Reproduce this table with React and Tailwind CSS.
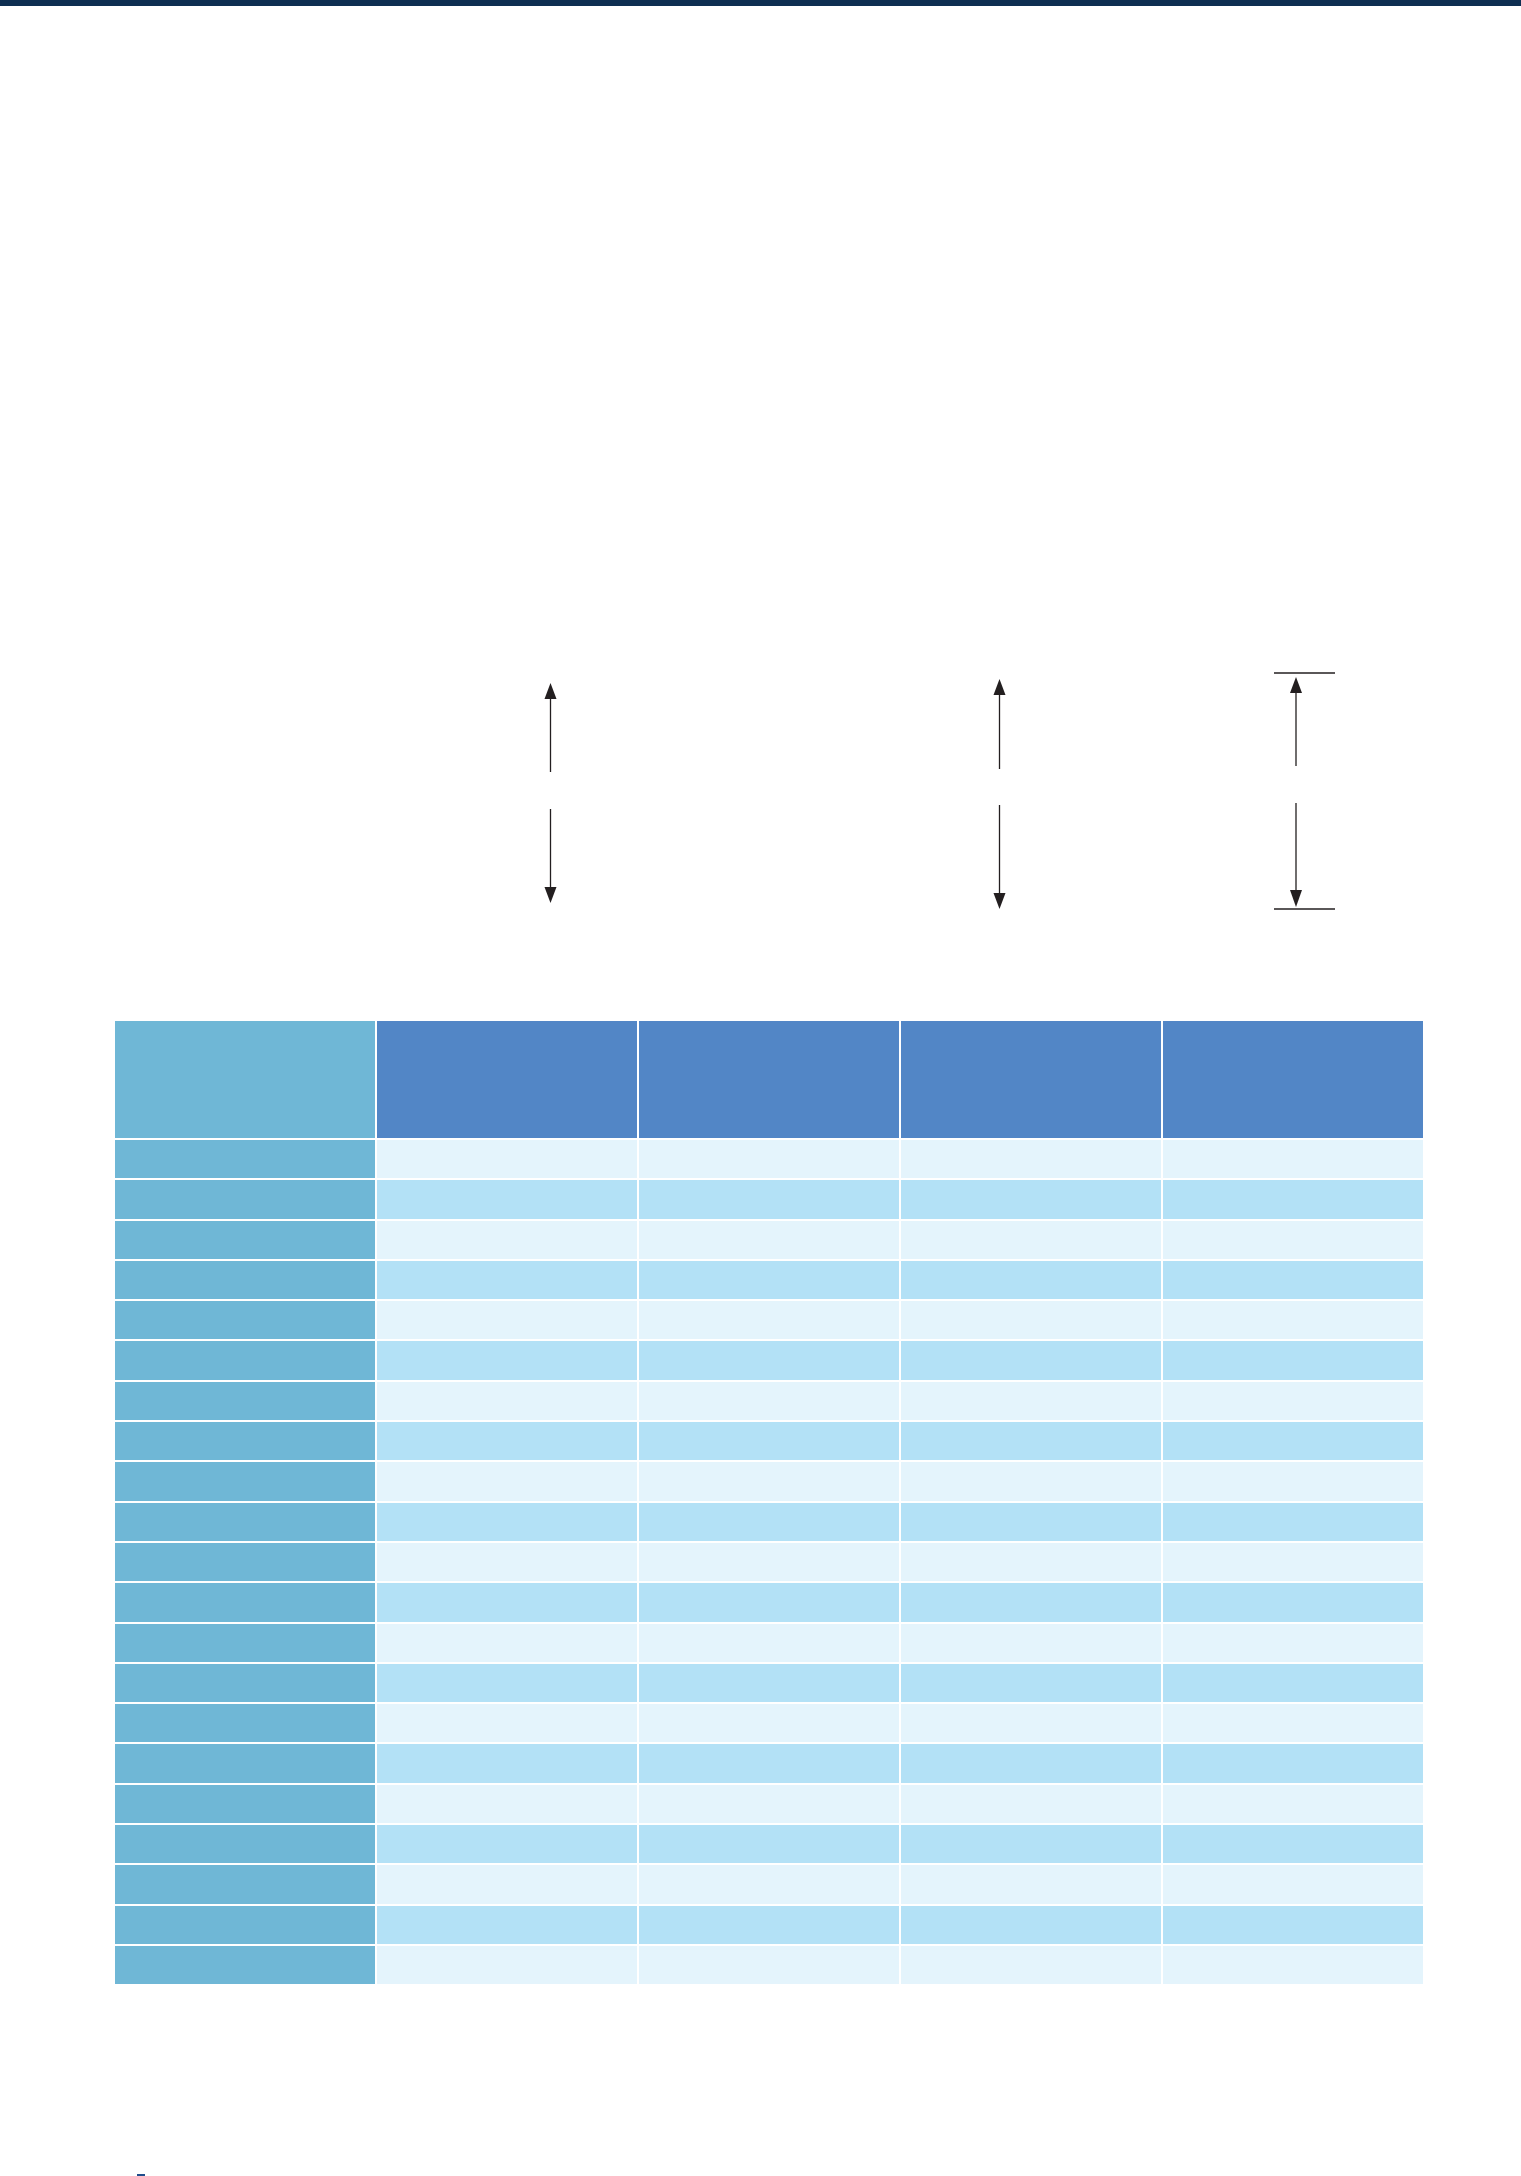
import React from "react";

const ROWS = 21;

function Arrow({ x, tip1, base1, end1, start2, base2, tip2 }) {
  return (
    <g>
      <polygon points={`${x},${tip1} ${x - 6},${base1} ${x + 6},${base1}`} fill="#231f20" />
      <line x1={x} y1={base1} x2={x} y2={end1} stroke="#231f20" strokeWidth="1.3" />
      <line x1={x} y1={start2} x2={x} y2={base2} stroke="#231f20" strokeWidth="1.3" />
      <polygon points={`${x},${tip2} ${x - 6},${base2} ${x + 6},${base2}`} fill="#231f20" />
    </g>
  );
}

export default function App() {
  return (
    <div className="w-[1521px] h-[2176px] bg-white overflow-hidden flex flex-col font-['Liberation_Sans',sans-serif]">
      <div className="h-[6px] w-full bg-[#0e2f52] shrink-0" />

      <svg className="mt-[654px] block shrink-0" width="1521" height="260" viewBox="0 0 1521 260">
        <Arrow x={550.5} tip1={23} base1={39} end1={112} start2={149} base2={227} tip2={243} />
        <Arrow x={999.5} tip1={19} base1={35} end1={109} start2={145} base2={233} tip2={249} />
        <line x1="1274" y1="13" x2="1335" y2="13" stroke="#231f20" strokeWidth="1.3" />
        <line x1="1274" y1="249" x2="1335" y2="249" stroke="#231f20" strokeWidth="1.3" />
        <Arrow x={1296} tip1={17} base1={33} end1={106} start2={143} base2={230} tip2={247} />
      </svg>

      <div className="mt-[101px] ml-[115px] w-[1308px] grid grid-cols-[260px_260px_260px_260px_260px] gap-x-[2px] gap-y-[2px] shrink-0">
        <div className="h-[117px] bg-[#6fb7d6]" />
        <div className="h-[117px] bg-[#5286c6]" />
        <div className="h-[117px] bg-[#5286c6]" />
        <div className="h-[117px] bg-[#5286c6]" />
        <div className="h-[117px] bg-[#5286c6]" />
        {Array.from({ length: ROWS }).map((_, r) => (
          <React.Fragment key={r}>
            <div className="h-[38.3px] bg-[#6fb7d6]" />
            {[0, 1, 2, 3].map((c) => (
              <div
                key={c}
                className={r % 2 === 0 ? "h-[38.3px] bg-[#e4f4fc]" : "h-[38.3px] bg-[#b3e1f6]"}
              />
            ))}
          </React.Fragment>
        ))}
      </div>

      <div className="mt-[190px] ml-[137px] w-[8px] h-[2px] bg-[#1f4e8c] shrink-0" />
    </div>
  );
}
